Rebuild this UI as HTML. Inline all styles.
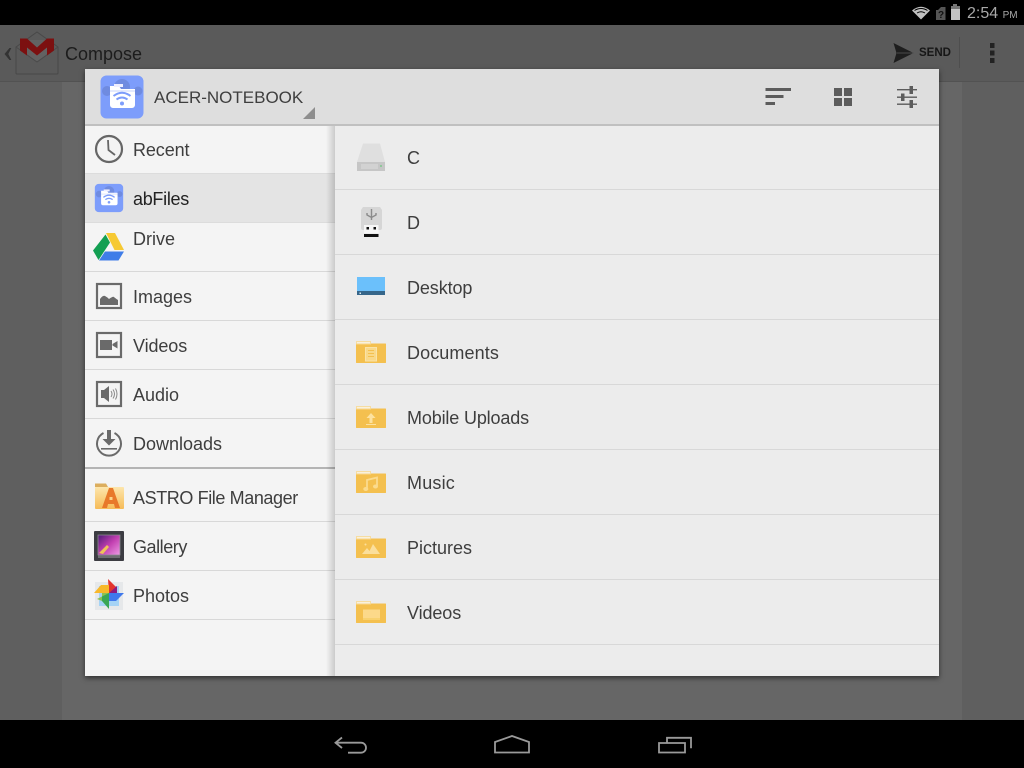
<!DOCTYPE html>
<html><head><meta charset="utf-8">
<style>
html,body{margin:0;padding:0;width:1024px;height:768px;overflow:hidden;background:#5f5f5f;font-family:"Liberation Sans",sans-serif}
.a{position:absolute}
#status{left:0;top:0;width:1024px;height:25px;background:#000}
#nav{left:0;top:720px;width:1024px;height:48px;background:#000}
#bar{left:0;top:25px;width:1024px;height:56px;background:#5a5a5a;border-bottom:1px solid #525252}
#center{left:62px;top:82px;width:900px;height:638px;background:#666}
#dlg{left:85px;top:69px;width:854px;height:607px;background:#ececec;box-shadow:0 2px 5px rgba(0,0,0,.55);overflow:hidden}
#hdr{left:0;top:0;width:854px;height:55px;background:#dedede;border-bottom:2px solid #c0c0c0;box-shadow:0 1px 2px rgba(0,0,0,.1)}
#side{left:0;top:57px;width:250px;height:550px;background:#f4f4f4}
#sh{left:241px;top:57px;width:9px;height:550px;background:linear-gradient(90deg,rgba(0,0,0,0),rgba(0,0,0,.17))}
.t{position:absolute;font-size:18px;line-height:22px;color:#3e3e3e;white-space:nowrap}
.ln{position:absolute;height:1px;background:#d8d8d8}
svg{position:absolute;left:0;top:0}
</style></head><body>
<div class="a" id="status"></div>
<div class="a" id="bar"></div>
<div class="a" id="center"></div>
<div class="a" id="nav"></div>
<div class="t" style="left:65px;top:43px;color:#1c1c1c">Compose</div>
<div class="t" style="left:919px;top:46px;font-size:11.5px;line-height:14px;font-weight:bold;color:#161616">SEND</div>
<div class="t" style="left:967px;top:3px;font-size:16px;color:#a8a8a8">2:54 <span style="font-size:10px">PM</span></div>

<div class="a" id="dlg">
 <div class="a" id="hdr"></div>
 <div class="a" id="side"></div>
 <div class="a" style="left:250px;top:57px;width:604px;height:550px;background:#ececec"></div>
 <div class="ln" style="left:0;top:104px;width:250px;background:#dcdcdc"></div>
 <div class="a" style="left:0;top:105px;width:250px;height:48px;background:#e4e4e4"></div>
 <div class="ln" style="left:0;top:153px;width:250px;background:#dcdcdc"></div>
 <div class="ln" style="left:0;top:202px;width:250px"></div>
 <div class="ln" style="left:0;top:251px;width:250px"></div>
 <div class="ln" style="left:0;top:300px;width:250px"></div>
 <div class="ln" style="left:0;top:349px;width:250px"></div>
 <div class="a" style="left:0;top:398px;width:250px;height:2px;background:#b4b4b4"></div>
 <div class="ln" style="left:0;top:452px;width:250px"></div>
 <div class="ln" style="left:0;top:501px;width:250px"></div>
 <div class="ln" style="left:0;top:550px;width:250px"></div>
 <div class="ln" style="left:250px;top:120px;width:604px"></div>
 <div class="ln" style="left:250px;top:185px;width:604px"></div>
 <div class="ln" style="left:250px;top:250px;width:604px"></div>
 <div class="ln" style="left:250px;top:315px;width:604px"></div>
 <div class="ln" style="left:250px;top:380px;width:604px"></div>
 <div class="ln" style="left:250px;top:445px;width:604px"></div>
 <div class="ln" style="left:250px;top:510px;width:604px"></div>
 <div class="ln" style="left:250px;top:575px;width:604px"></div>
 <div class="a" id="sh"></div>
</div>

<div class="t" style="left:154px;top:87px;font-size:17px">ACER-NOTEBOOK</div>
<div class="t" style="left:133px;top:139px;letter-spacing:-.1px">Recent</div>
<div class="t" style="left:133px;top:188px;color:#222;letter-spacing:-.3px">abFiles</div>
<div class="t" style="left:133px;top:228px">Drive</div>
<div class="t" style="left:133px;top:286px">Images</div>
<div class="t" style="left:133px;top:335px;letter-spacing:-.1px">Videos</div>
<div class="t" style="left:133px;top:384px">Audio</div>
<div class="t" style="left:133px;top:433px">Downloads</div>
<div class="t" style="left:133px;top:487px;letter-spacing:-.4px">ASTRO File Manager</div>
<div class="t" style="left:133px;top:536px;letter-spacing:-.45px">Gallery</div>
<div class="t" style="left:133px;top:585px">Photos</div>
<div class="t" style="left:407px;top:147px">C</div>
<div class="t" style="left:407px;top:212px">D</div>
<div class="t" style="left:407px;top:277px;letter-spacing:-.1px">Desktop</div>
<div class="t" style="left:407px;top:342px;letter-spacing:.1px">Documents</div>
<div class="t" style="left:407px;top:407px;letter-spacing:-.15px">Mobile Uploads</div>
<div class="t" style="left:407px;top:472px;letter-spacing:.2px">Music</div>
<div class="t" style="left:407px;top:537px">Pictures</div>
<div class="t" style="left:407px;top:602px;letter-spacing:-.1px">Videos</div>

<svg width="1024" height="768" viewBox="0 0 1024 768">
 <defs>
  <symbol id="ab" viewBox="0 0 44 44">
   <rect x="0.5" y="0.5" width="43" height="43" rx="6" fill="#7d9dfb"/>
   <circle cx="22" cy="12" r="8" fill="#6f8be0"/><circle cx="7" cy="16" r="5" fill="#6f8be0"/><circle cx="38" cy="16" r="4.5" fill="#6f8be0"/>
   <path d="M10 11h9l2 3h14v16a3 3 0 0 1-3 3H13a3 3 0 0 1-3-3z" fill="#fff"/>
   <path d="M14 9h9v3H14z" fill="#eef"/>
   <path d="M13.500 21q8.500-6.500 17 0M16.500 24.500q5.500-4 11 0" fill="none" stroke="#7d9dfb" stroke-width="2"/>
   <circle cx="22" cy="28.500" r="2" fill="#7d9dfb"/>
   <path d="M10 16h25" stroke="#c8d4fb" stroke-width="1"/>
  </symbol>
  <symbol id="fold" viewBox="0 0 30 25">
   <rect x="0" y="0" width="15" height="4" fill="#f6dda2"/>
   <rect x="1" y="1" width="13" height="1.500" fill="#f8f1df"/>
   <rect x="0" y="2.500" width="30" height="19.500" rx="0.500" fill="#f4c04f"/>
   <rect x="0" y="2.500" width="15" height="1" fill="#f8d68c"/>
  </symbol>
  <linearGradient id="astro" x1="0" y1="0" x2="0" y2="1"><stop offset="0" stop-color="#fde6ac"/><stop offset="1" stop-color="#f6bb58"/></linearGradient>
  <linearGradient id="gal" x1="0" y1="0" x2="1" y2="1"><stop offset="0" stop-color="#4e1a78"/><stop offset=".5" stop-color="#c23fb0"/><stop offset="1" stop-color="#ec9ae4"/></linearGradient>
 </defs>

 <!-- status icons -->
 <path d="M912 10.500q9-7.500 18 0l-9 9z" fill="#c0c0c0"/>
 <path d="M914.500 10.500q6.500-4 13 0M917 13q4-2.500 8 0" stroke="#000" stroke-width="1" fill="none"/>
 <path d="M938 10l3-3h4.500v13H936V10z" fill="#555"/>
 <text x="938" y="18" font-size="10" font-weight="bold" fill="#111" font-family="Liberation Sans">?</text>
 <path d="M951 6h2V4h4v2h3v14h-9z" fill="#c4c4c4"/>
 <path d="M951 6h2V4h4v2h3v3h-9z" fill="#777"/>

 <!-- actionbar -->
 <path d="M9.500 48l-5 6 5 6h1.800l-3-6 3-6z" fill="#333"/>
 <path d="M16 47l21-15 21 15v26a1 1 0 0 1-1 1H17a1 1 0 0 1-1-1z" fill="#5a5a5a" stroke="#484848"/>
 <path d="M20 40h34v10l-17 12-17-12z" fill="#626262"/>
 <path d="M16 47l21 15 21-15" fill="none" stroke="#4a4a4a"/>
 <path d="M20 38.500h7l10 9 10-9h7v12l-7 5v-8l-10 8-10-8v8l-7-5z" fill="#7c1010"/>
 <path d="M893.500 43l20 10-20 10 3-10z" fill="#1e1e1e"/>
 <path d="M897 53h16" stroke="#4a4a4a"/>
 <path d="M959.500 37v31" stroke="#4e4e4e"/>
 <rect x="990" y="43" width="4.500" height="5" fill="#222"/><rect x="990" y="50.500" width="4.500" height="5" fill="#222"/><rect x="990" y="58" width="4.500" height="5" fill="#222"/>

 <!-- dialog header -->
 <use href="#ab" x="100" y="75" width="44" height="44"/>
 <path d="M315 107v12h-12z" fill="#8e8e8e"/>
 <g fill="#5c5c5c">
  <rect x="765.500" y="88" width="25.500" height="3"/><rect x="765.500" y="95" width="18" height="3"/><rect x="765.500" y="102" width="9.500" height="3"/>
  <rect x="834" y="88" width="8" height="8"/><rect x="844" y="88" width="8" height="8"/><rect x="834" y="98" width="8" height="8"/><rect x="844" y="98" width="8" height="8"/>
  <rect x="897" y="89" width="20" height="1.400"/><rect x="897" y="96.500" width="20" height="1.400"/><rect x="897" y="103.500" width="20" height="1.400"/>
  <rect x="909.500" y="86" width="3.500" height="8"/><rect x="901" y="93.500" width="3.500" height="7.500"/><rect x="909.500" y="100" width="3.500" height="8"/>
 </g>

 <!-- Recent -->
 <circle cx="109" cy="149" r="13" fill="none" stroke="#666" stroke-width="2.200"/>
 <path d="M108 140l.5 10 6.500 5" fill="none" stroke="#666" stroke-width="1.800"/>
 <use href="#ab" x="94.500" y="183.500" width="29" height="29"/>

 <!-- Drive -->
 <path d="M106 233h9l9 17h-9.500z" fill="#f6c933"/>
 <path d="M105.500 234.500l4.500 8-11.500 17.500-5.500-9.500z" fill="#139f52"/>
 <path d="M105 251.500h19l-5.500 9h-19.500z" fill="#3f7de8"/>

 <!-- Images -->
 <g fill="none" stroke="#6a6a6a" stroke-width="2.200"><rect x="97" y="284" width="24" height="24"/><rect x="97" y="333" width="24" height="24"/><rect x="97" y="382" width="24" height="24"/></g>
 <path d="M100 305v-6q3-4 5-3t4 3q4-3 5-2t4 3v5z" fill="#6a6a6a"/>
 <path d="M100 340h12v10h-12zM112.500 344l5-3v7.500l-5-3z" fill="#6a6a6a"/>
 <path d="M101 390h3l5-4v16l-5-4h-3z" fill="#6a6a6a"/>
 <path d="M111 391q2 3 0 6M113 389.500q3 4.500 0 9M115.500 388.500q3 5.500 0 11" fill="none" stroke="#888" stroke-width="1"/>

 <!-- Downloads -->
 <path d="M103.500 433a12 12 0 1 0 11 0" fill="none" stroke="#6a6a6a" stroke-width="2"/>
 <path d="M107 430h4v9h4.500l-6.500 6.500-6.500-6.500h4.500z" fill="#6a6a6a"/>
 <rect x="101" y="448" width="16" height="1.600" fill="#6a6a6a"/>

 <!-- Astro -->
 <path d="M95 483.500h11l2 3.500H95z" fill="#dcae5e"/>
 <rect x="95" y="487" width="29" height="22" rx="1" fill="url(#astro)"/>
 <path d="M102 508l7-20h4l7 20h-5l-1-4h-6l-1 4z" fill="#e8792a"/>
 <rect x="109.500" y="497" width="3" height="3" fill="#fbd48a"/>

 <!-- Gallery -->
 <rect x="94" y="531" width="30" height="30" rx="1" fill="#3c3c42"/>
 <rect x="98" y="554" width="22" height="4" fill="#6e6e72"/>
 <rect x="98" y="535" width="22" height="20" fill="url(#gal)"/>
 <path d="M99 553l8-8 2 2-6 7z" fill="#eec25a"/>
 <path d="M98 535h22v20H98z" fill="none" stroke="#8a8a90" stroke-width=".8"/>

 <!-- Photos -->
 <rect x="95" y="582" width="28" height="28" fill="#e6e8ea"/><rect x="99" y="586" width="20" height="20" fill="#a5d3f5"/>
 <path d="M109 593l-1-14 9 9-8 5z" fill="#e3352d"/>
 <path d="M109 593l8-7v7z" fill="#8c1a7e"/>
 <path d="M109 593h15l-8 8h-7z" fill="#3f78ec"/>
 <path d="M109 593v16l-7-8v-8z" fill="#3aa655"/>
 <path d="M109 593h-7v8l-5-2z" fill="#8cc152"/>
 <path d="M109 593H94l7-8h8z" fill="#f8b82a"/>

 <!-- C drive -->
 <path d="M363 143.500h17l5 18.500h-28z" fill="#dfdfdf"/>
 <rect x="357" y="162" width="28" height="9" fill="#c6c6c6"/>
 <rect x="361" y="164" width="17" height="5" fill="#d2d2d2"/>
 <rect x="380" y="165" width="2" height="2" fill="#8fc79a"/>

 <!-- D usb -->
 <path d="M363 207h17l2 3v18a2 2 0 0 1-2 2h-17a2 2 0 0 1-2-2v-18z" fill="#d6d6d6"/>
 <path d="M371.500 209v11M367 213v2l4.500 2.500 4.500-2.500v-2" fill="none" stroke="#8a8a8a" stroke-width="1.400"/>
 <rect x="364" y="225" width="14.500" height="8" fill="#f6f6f6"/>
 <rect x="366.500" y="227" width="2.500" height="2.500" fill="#111"/><rect x="373.500" y="227" width="2.500" height="2.500" fill="#111"/>
 <rect x="364" y="234" width="14.500" height="3" fill="#111"/>

 <!-- Desktop -->
 <rect x="357" y="277" width="28" height="17" fill="#6bc0fb"/>
 <rect x="357" y="291" width="28" height="4" fill="#36668a"/>
 <rect x="359.500" y="292.500" width="1.500" height="1.500" fill="#d8e8f0"/>

 <!-- Folders -->
 <use href="#fold" x="356" y="341" width="30" height="25"/>
 <use href="#fold" x="356" y="406" width="30" height="25"/>
 <use href="#fold" x="356" y="471" width="30" height="25"/>
 <use href="#fold" x="356" y="536" width="30" height="25"/>
 <use href="#fold" x="356" y="601" width="30" height="25"/>

 <!-- Doc glyph -->
 <rect x="365.500" y="347.500" width="11" height="13.500" fill="#f9d98a" stroke="#fae3a8" stroke-width="1"/>
 <path d="M368 350.500h6M368 353.500h6M368 356.500h6" stroke="#f4c04f" stroke-width="1"/>
 <!-- Upload -->
 <path d="M371 413l-4.500 5h3v5h3v-5h3z" fill="#fde2a0"/><rect x="366" y="424" width="10" height="1" fill="#fde2a0"/>
 <!-- Music -->
 <path d="M367 488.500v-8.500l10-2.500v8.500" fill="none" stroke="#fbdb8e" stroke-width="1.800"/>
 <ellipse cx="365.800" cy="489" rx="2.500" ry="2" fill="#fbdb8e"/><ellipse cx="375.500" cy="486.500" rx="2.500" ry="2" fill="#fbdb8e"/>
 <!-- Pictures -->
 <path d="M362 554l5-6 2.500 3 3.500-7 7 10z" fill="#fbdf9c"/>
 <circle cx="365.500" cy="544.500" r="1" fill="#fbdf9c"/>
 <!-- Videos -->
 <rect x="363" y="609.500" width="17" height="10.500" fill="#f8d16f"/>
 <rect x="363" y="609.500" width="17" height="8.500" fill="#fcd98a"/>

 <!-- Nav -->
 <g fill="none" stroke="#9a9a9a" stroke-width="1.800">
  <path d="M342 737.500l-6.500 5.200 6.500 5.300M336 742.700h25a5 5 0 0 1 0 10H348"/>
  <path d="M495 752.500v-10.500l17-6 17 6v10.500z"/>
  <path d="M659 743h26v9.500h-26z"/>
  <path d="M667 742.500v-4.700h24v10.500"/>
 </g>
</svg>
</body></html>
